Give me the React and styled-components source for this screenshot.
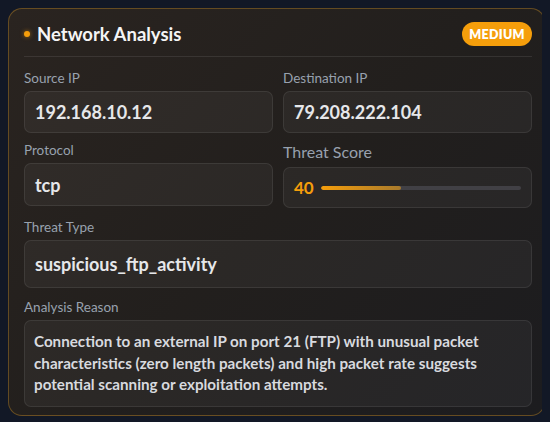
import React from 'react';
import styled, { createGlobalStyle } from 'styled-components';

const GlobalStyle = createGlobalStyle`
  html, body {
    background: #121826;
  }
  body {
    margin: 8px;
    font-family: Lato, "Noto Sans", sans-serif;
  }
  * {
    box-sizing: border-box;
  }
`;

const Card = styled.div`
  width: 537px;
  padding: 13px 12px 8px 15px;
  border: 1px solid rgba(214, 150, 40, 0.38);
  border-radius: 14px;
  background: linear-gradient(135deg, #2a2420 0%, #221f1d 50%, #1c1c1f 100%);
`;

const Header = styled.div`
  display: flex;
  align-items: center;
  justify-content: space-between;
  padding-bottom: 10px;
  border-bottom: 1px solid rgba(255, 255, 255, 0.09);
`;

const Title = styled.h2`
  display: flex;
  align-items: center;
  gap: 7px;
  margin: 0;
  font-size: 18.5px;
  font-weight: 700;
  color: #f5f5f5;
`;

const Dot = styled.span`
  width: 6px;
  height: 6px;
  border-radius: 50%;
  background: #f59e0b;
  box-shadow: 0 0 4px rgba(245, 158, 11, 0.6);
`;

const Badge = styled.span`
  display: inline-flex;
  align-items: center;
  justify-content: center;
  width: 70px;
  height: 24px;
  border-radius: 12px;
  background: #f59e0b;
  color: #fff;
  font-size: 12.5px;
  font-weight: 800;
  letter-spacing: 0.3px;
`;

const Grid = styled.div`
  display: grid;
  grid-template-columns: 1fr 1fr;
  column-gap: 10px;
  row-gap: 8px;
  margin-top: 12px;
`;

const Field = styled.div`
  display: flex;
  flex-direction: column;
  margin-top: ${p => (p.$spaced ? '10px' : '0')};
`;

const Label = styled.span`
  font-size: ${p => (p.$large ? '16px' : '13.5px')};
  line-height: ${p => (p.$large ? '22px' : '18px')};
  margin-bottom: 4px;
  color: #98a1ae;
`;

const Value = styled.div`
  padding: ${p => p.$pad || '9px'} 10px;
  border: 1px solid rgba(255, 255, 255, 0.08);
  border-radius: 7px;
  background: rgba(255, 255, 255, 0.045);
  color: #e6e7ea;
  font-size: 18px;
  font-weight: 700;
  line-height: 22px;
`;

const ScoreBox = styled.div`
  display: flex;
  align-items: center;
  gap: 7px;
  height: 41px;
  padding: 0 10px;
  border: 1px solid rgba(255, 255, 255, 0.08);
  border-radius: 7px;
  background: rgba(255, 255, 255, 0.045);
`;

const Score = styled.span`
  color: #f59e0b;
  font-size: 17px;
  font-weight: 700;
`;

const Track = styled.div`
  flex: 1;
  height: 4px;
  border-radius: 2px;
  background: #414045;
  overflow: hidden;
`;

const Fill = styled.div`
  height: 100%;
  border-radius: 2px;
  background: linear-gradient(90deg, #f59e0b, #a87a2c);
`;

const Reason = styled.div`
  padding: 10px 9px;
  border: 1px solid rgba(255, 255, 255, 0.08);
  border-radius: 7px;
  background: rgba(255, 255, 255, 0.045);
  color: #d8dadf;
  font-size: 15.2px;
  font-weight: 700;
  line-height: 21.5px;
`;

const data = {
  severity: 'MEDIUM',
  sourceIp: '192.168.10.12',
  destinationIp: '79.208.222.104',
  protocol: 'tcp',
  threatScore: 40,
  threatType: 'suspicious_ftp_activity',
  reason:
    'Connection to an external IP on port 21 (FTP) with unusual packet characteristics (zero length packets) and high packet rate suggests potential scanning or exploitation attempts.',
};

const App = () => (
  <>
    <GlobalStyle />
    <Card>
      <Header>
        <Title>
          <Dot />
          Network Analysis
        </Title>
        <Badge>{data.severity}</Badge>
      </Header>

      <Grid>
        <Field>
          <Label>Source IP</Label>
          <Value>{data.sourceIp}</Value>
        </Field>
        <Field>
          <Label>Destination IP</Label>
          <Value>{data.destinationIp}</Value>
        </Field>
        <Field>
          <Label>Protocol</Label>
          <Value $pad="9.5px">{data.protocol}</Value>
        </Field>
        <Field>
          <Label $large>Threat Score</Label>
          <ScoreBox>
            <Score>{data.threatScore}</Score>
            <Track>
              <Fill style={{ width: `${data.threatScore}%` }} />
            </Track>
          </ScoreBox>
        </Field>
      </Grid>

      <Field $spaced>
        <Label>Threat Type</Label>
        <Value $pad="12px">{data.threatType}</Value>
      </Field>

      <Field $spaced>
        <Label>Analysis Reason</Label>
        <Reason>{data.reason}</Reason>
      </Field>
    </Card>
  </>
);

export default App;
